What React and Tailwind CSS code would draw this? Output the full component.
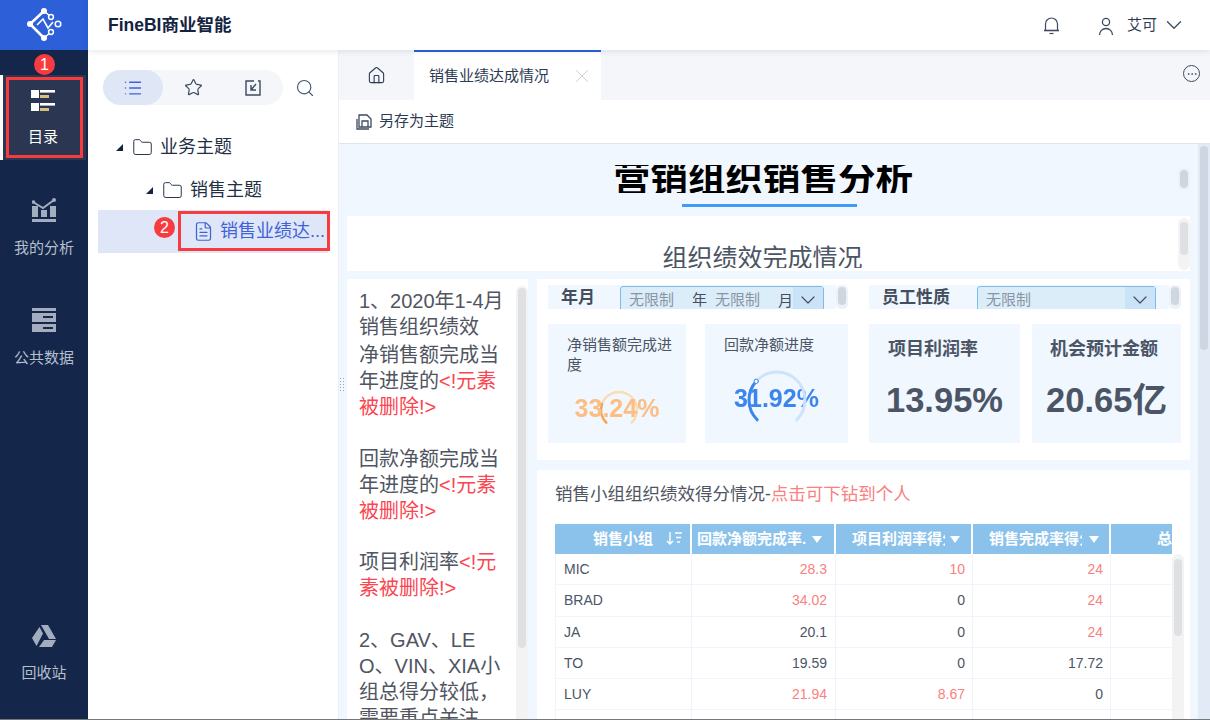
import { Home, X, Star, Search, List, FileText, Folder, Ellipsis, ChevronDown } from "lucide-react";

const font = "font-['Liberation_Sans','Noto_Sans_CJK_SC',sans-serif]";

const rows = [
  ["MIC", "28.3", "10", "24", true, true, true],
  ["BRAD", "34.02", "0", "24", true, false, true],
  ["JA", "20.1", "0", "24", false, false, true],
  ["TO", "19.59", "0", "17.72", false, false, false],
  ["LUY", "21.94", "8.67", "0", true, true, false],
  ["", "", "", "", false, false, false],
];

function Logo() {
  return (
    <svg width="36" height="34" viewBox="0 0 36 34" fill="none" stroke="#fff" strokeWidth="2.6">
      <path d="M17 3 L3 16 L17 30" />
      <path d="M17 3 L24 9 M17 30 L24 24" strokeWidth="1.6" />
      <path d="M10 17 L16 11 L21 20 L26 14" strokeWidth="1.6" />
      <circle cx="17" cy="3" r="3" fill="#fff" stroke="none" />
      <circle cx="3" cy="16" r="3" fill="#fff" stroke="none" />
      <circle cx="17" cy="30" r="3" fill="#fff" stroke="none" />
      <circle cx="24" cy="9" r="2.4" fill="#2c5fd8" strokeWidth="1.5" />
      <circle cx="31" cy="16" r="2.8" fill="#2c5fd8" strokeWidth="1.5" />
      <circle cx="24" cy="24" r="2.4" fill="#2c5fd8" strokeWidth="1.5" />
    </svg>
  );
}

function CatalogIcon() {
  return (
    <svg width="24" height="21" viewBox="0 0 24 21" fill="#fff">
      <rect x="0" y="0" width="8" height="8" />
      <rect x="9" y="0" width="15" height="2.6" />
      <rect x="9" y="5" width="9" height="3" fill="#d8c07a" />
      <rect x="0" y="13" width="8" height="8" />
      <rect x="9" y="13" width="15" height="2.6" />
      <rect x="9" y="18" width="9" height="3" fill="#d8c07a" />
    </svg>
  );
}

function AnalysisIcon() {
  return (
    <svg width="24" height="24" viewBox="0 0 24 24" fill="#a3adbf">
      <rect x="0" y="21" width="24" height="3" />
      <rect x="0" y="8" width="6" height="11" />
      <rect x="9" y="12" width="6" height="7" />
      <rect x="18" y="8" width="6" height="11" />
      <path d="M1 4 L11 10 L22 2" fill="none" stroke="#a3adbf" strokeWidth="2" />
      <circle cx="1.5" cy="4" r="1.8" />
      <circle cx="22" cy="2" r="2" />
    </svg>
  );
}

function DataIcon() {
  return (
    <svg width="24" height="24" viewBox="0 0 24 24" fill="#a3adbf">
      <rect x="0" y="0" width="24" height="3" />
      <rect x="0" y="5" width="24" height="9" />
      <rect x="0" y="16" width="24" height="8" />
      <rect x="11" y="8" width="10" height="2" fill="#14274a" />
      <rect x="11" y="19" width="10" height="2" fill="#14274a" />
    </svg>
  );
}

function RecycleIcon() {
  return (
    <svg width="24" height="22" viewBox="0 0 24 22" fill="#a3adbf">
      <path d="M9 0 H16 L24 14 H17 Z" />
      <path d="M7.5 2 L11 8.5 L4.5 21 L0 13 Z" />
      <path d="M7 22 L12 15 H24 L20 22 Z" />
    </svg>
  );
}

function BellIcon() {
  return (
    <svg width="17" height="19" viewBox="0 0 17 19" fill="none" stroke="#3d4a60" strokeWidth="1.2">
      <path d="M2.5 14 V8 A6 6 0 0 1 14.5 8 V14" />
      <path d="M1 14.5 H16" strokeWidth="1.6" />
      <path d="M6.5 17.5 H10.5" />
    </svg>
  );
}

function UserIcon() {
  return (
    <svg width="16" height="18" viewBox="0 0 16 18" fill="none" stroke="#3d4a60" strokeWidth="1.3">
      <circle cx="8" cy="5" r="3.6" />
      <path d="M1.5 18 A6.5 6.5 0 0 1 14.5 18" />
    </svg>
  );
}

function NavItem({ icon, label, active }) {
  return (
    <div className={`h-[85px] pt-[2px] flex flex-col items-center justify-center gap-[15px] text-[15px] leading-[22px] ${active ? "text-white" : "text-[#b5bfce]"}`}>
      {icon}
      <span>{label}</span>
    </div>
  );
}

function Badge({ n, className }) {
  return (
    <span className={`absolute w-[21px] h-[21px] rounded-full bg-[#f73b3f] text-white text-[16px] flex items-center justify-center ${className}`}>{n}</span>
  );
}

function Filter({ label, labelW, w, children }) {
  return (
    <div className="h-[24px] bg-[#f0f7fe] flex overflow-hidden" style={{ width: w }}>
      <span className={`${labelW} shrink-0 pl-[13px] text-[17px] font-bold text-[#454e5e] leading-[26px]`}>{label}</span>
      {children}
    </div>
  );
}

function ScrollStub({ className = "h-[24px]" }) {
  return (
    <div className={`w-[12px] bg-[#eef2f7] rounded-[5px] flex justify-center ${className}`}>
      <div className="w-[8px] h-[18px] mt-[2px] rounded-[4px] bg-[#cfd6e0]" />
    </div>
  );
}

function HeadArrow() {
  return <span className="shrink-0 mt-[12px] h-0 w-0 border-x-[5px] border-x-transparent border-t-[7px] border-t-white" />;
}

export default function App() {
  return (
    <div className={`relative w-[1210px] h-[720px] overflow-hidden bg-white flex ${font}`}>
      {/* 左侧导航 */}
      <aside className="relative w-[88px] shrink-0 bg-[#14274a] flex flex-col">
        <div className="h-[50px] bg-[#2c5fd8] flex items-center justify-center pl-[1px]"><Logo /></div>
        <div className="mt-[25px] h-[85px] w-[86px] bg-[#2a3652] border-l-[3px] border-white">
          <div className="-ml-[3px]"><NavItem icon={<CatalogIcon />} label="目录" active /></div>
        </div>
        <div className="mt-[25px]"><NavItem icon={<AnalysisIcon />} label="我的分析" /></div>
        <div className="mt-[25px]"><NavItem icon={<DataIcon />} label="公共数据" /></div>
        <div className="mt-auto mb-[24px]"><NavItem icon={<RecycleIcon />} label="回收站" /></div>
        <div className="absolute left-[6px] top-[77px] w-[77px] h-[81px] border-[3px] border-[#f73b3f]" />
        <Badge n="1" className="left-[34px] top-[54px]" />
      </aside>

      <div className="flex-1 min-w-0 flex flex-col">
        {/* 顶栏 */}
        <header className="h-[50px] shrink-0 bg-white flex items-center pl-[20px] pr-[23px] shadow-[0_1px_6px_rgba(20,40,80,0.12)] z-10 relative">
          <span className="text-[17.5px] font-bold text-[#14233f]">FineBI商业智能</span>
          <span className="ml-auto mr-[38px]"><BellIcon /></span>
          <span className="mr-[13px] mt-[2px]"><UserIcon /></span>
          <span className="text-[15px] text-[#2c3a52] mr-[4px]">艾可</span>
          <ChevronDown className="text-[#3d4a60]" size={26} strokeWidth={1.2} />
        </header>

        <div className="flex-1 min-h-0 flex">
          {/* 目录面板 */}
          <div className="relative w-[251px] shrink-0 bg-white border-r border-[#eceff4]">
            <div className="flex items-center mt-[20px] ml-[15px]">
              <div className="w-[180px] h-[35px] rounded-full bg-[#f4f6fa] flex items-center">
                <div className="w-[60px] h-[35px] rounded-full bg-[#dfe6f5] flex items-center justify-center text-[#3f63d6]"><List size={20} strokeWidth={1.7} /></div>
                <div className="w-[60px] flex justify-center text-[#3d4a60]"><Star size={19} strokeWidth={1.5} /></div>
                <div className="w-[60px] flex justify-center text-[#3d4a60]">
                  <svg width="18" height="18" viewBox="0 0 18 18" fill="none" stroke="currentColor" strokeWidth="1.4">
                    <path d="M10 2 H2 V16 H16 V2 H14" />
                    <path d="M12 5 L7 11 M7 6 V11 H12" />
                  </svg>
                </div>
              </div>
              <Search className="ml-[12px] text-[#3d5a74]" size={20} strokeWidth={1.4} />
            </div>
            <div className="mt-[31px] h-[22px] flex items-center pl-[28px] text-[18px] text-[#232f45]">
              <span className="border-l-[7px] border-b-[7px] border-l-transparent border-b-[#14233f] mr-[9px]" />
              <Folder className="mr-[7px]" size={21} strokeWidth={1.1} />
              业务主题
            </div>
            <div className="mt-[21px] h-[22px] flex items-center pl-[58px] text-[18px] text-[#232f45]">
              <span className="border-l-[7px] border-b-[7px] border-l-transparent border-b-[#14233f] mr-[9px]" />
              <Folder className="mr-[7px]" size={21} strokeWidth={1.1} />
              销售主题
            </div>
            <div className="mt-[9px] ml-[10px] w-[230px] h-[43px] bg-[#dfe6f7] flex items-center pl-[95px] text-[18px] text-[#3f63d6]">
              <FileText className="mr-[6px] shrink-0" size={21} strokeWidth={1.4} />
              <span className="whitespace-nowrap">销售业绩达...</span>
            </div>
            <div className="absolute left-[90px] top-[161px] w-[152px] h-[40px] border-[3px] border-[#f73b3f]" />
            <Badge n="2" className="left-[66px] top-[167px]" />
          </div>

          {/* 右侧内容 */}
          <div className="relative flex-1 min-w-0 flex flex-col">
            <div className="h-[50px] shrink-0 bg-[#f4f6fa] flex">
              <div className="w-[75px] flex items-center justify-center text-[#2c3a52]"><Home size={19} strokeWidth={1.4} /></div>
              <div className="w-[187px] bg-white border-t-2 border-[#2c5fd8] flex items-center pl-[15px] text-[15px] text-[#2c3a52]">
                销售业绩达成情况
                <X className="ml-auto mr-[8px] text-[#c4c9d0]" size={22} strokeWidth={1} />
              </div>
              <div className="ml-auto mr-[10px] mt-[15px] w-[17px] h-[17px] rounded-full border border-[#3d4a60] flex items-center justify-center text-[#3d4a60]"><Ellipsis size={12} strokeWidth={1.5} /></div>
            </div>
            <div className="h-[44px] shrink-0 bg-white border-b border-[#dfe4ec] flex items-center pl-[17px] text-[15px] text-[#2c3a52]">
              <svg className="mr-[6px]" width="17" height="17" viewBox="0 0 17 17" fill="none" stroke="#3d4a60" strokeWidth="1.3">
                <path d="M3 14 V2 H11 L15 6 V14 Z" />
                <path d="M6 14 V8 H12 V14" />
                <path d="M1 6 V16 H13" />
              </svg>
              另存为主题
            </div>

            {/* 仪表板 */}
            <div className="flex-1 min-h-0 overflow-hidden bg-[#f0f7fe] relative">
              <div className="relative h-[72px] pt-[21px] pr-[10px] flex flex-col items-center">
                <div className="h-[28px] overflow-hidden pr-[13px]">
                  <span className="block text-[37.5px] leading-[28px] font-bold text-black whitespace-nowrap">营销组织销售分析</span>
                </div>
                <div className="mt-[11px] w-[175px] h-[3px] bg-[#3f9bf5]" />
                <ScrollStub className="absolute left-[839px] top-[24px] h-[22px]" />
              </div>
              <div className="relative ml-[8px] w-[843px] h-[55px] bg-white flex justify-center pr-[12px] pt-[26px]">
                <div className="h-[26px] overflow-hidden text-[25px] text-[#4b5565] leading-[32px]">组织绩效完成情况</div>
                <div className="absolute right-0 top-[2px] w-[12px] h-[52px] bg-[#f3f3f3] rounded-[6px] flex justify-center">
                  <div className="w-[8px] h-[33px] mt-[4px] rounded-[4px] bg-[#dfe0e3]" />
                </div>
              </div>

              <div className="ml-[8px] mt-[8px] flex gap-[9px]">
                {/* 文本框 */}
                <div className="relative w-[181px] h-[460px] bg-white pl-[12px] pr-[12px] pt-[9px] text-[20px] leading-[26px] text-[#505561] overflow-hidden">
                  <p className="w-[146px]">1、2020年1-4月销售组织绩效</p>
                  <p className="w-[146px] mt-[2px]">净销售额完成当年进度的<span className="text-[#fb4551]">&lt;!元素被删除!&gt;</span></p>
                  <p className="w-[146px] mt-[26px]">回款净额完成当年进度的<span className="text-[#fb4551]">&lt;!元素被删除!&gt;</span></p>
                  <p className="w-[146px] mt-[25px]">项目利润率<span className="text-[#fb4551]">&lt;!元素被删除!&gt;</span></p>
                  <p className="w-[146px] mt-[26px] whitespace-nowrap">2、GAV、LE<br />O、VIN、XIA小<br />组总得分较低，<br />需要重点关注</p>
                  <div className="absolute right-0 top-[7px] bottom-0 w-[12px] bg-[#f3f3f3] rounded-t-[6px] flex justify-center">
                    <div className="w-[8px] h-[360px] mt-[2px] rounded-[4px] bg-[#dfe0e3]" />
                  </div>
                </div>

                <div className="w-[653px]">
                  {/* 指标卡 */}
                  <div className="h-[181px] bg-white pl-[11px] pt-[6px]">
                    <div className="flex">
                      <Filter label="年月" labelW="w-[72px]" w={288}>
                        <div className="w-[204px] h-[30px] mt-[1px] rounded-t-[3px] border border-[#7dbbee] bg-[#dcedfa] flex whitespace-nowrap text-[15px] leading-[26px] text-[#8a94a6] pl-[8px]">
                          <span>无限制</span>
                          <span className="ml-[18px] text-[#454e5e]">年</span>
                          <span className="ml-[8px]">无限制</span>
                          <span className="ml-[18px] text-[#454e5e] mt-[1px]">月</span>
                          <span className="ml-auto w-[30px] shrink-0 bg-[#cbe3f7] flex justify-center pt-[1px]"><ChevronDown className="text-[#454e5e]" size={24} strokeWidth={1.2} /></span>
                        </div>
                      </Filter>
                      <ScrollStub />
                      <div className="w-[21px]" />
                      <Filter label="员工性质" labelW="w-[108px]" w={300}>
                        <div className="w-[179px] h-[30px] mt-[1px] rounded-t-[3px] border border-[#7dbbee] bg-[#dcedfa] flex whitespace-nowrap text-[15px] leading-[26px] text-[#8a94a6] pl-[8px]">
                          <span>无限制</span>
                          <span className="ml-auto w-[30px] shrink-0 bg-[#cbe3f7] flex justify-center pt-[1px]"><ChevronDown className="text-[#454e5e]" size={24} strokeWidth={1.2} /></span>
                        </div>
                      </Filter>
                      <ScrollStub />
                    </div>
                    <div className="mt-[15px] flex h-[119px]">
                      <div className="relative w-[138px] bg-[#f0f7fe] pl-[19px] pr-[12px] pt-[11px] text-[15px] leading-[20px] text-[#4b5565]">
                        净销售额完成进度
                        <svg className="absolute left-0 top-0" width="138" height="119" fill="none" strokeLinecap="round">
                          <path d="M58.3 98.7 A18 18 0 1 1 83.7 98.7" stroke="#fbdcb9" strokeWidth="2.5" />
                          <path d="M58.3 98.7 A18 18 0 0 1 54 80" stroke="#f2a65a" strokeWidth="2.5" />
                        </svg>
                        <div className="absolute left-0 right-0 top-[69px] h-[30px] text-center text-[25px] leading-[30px] font-bold text-[#fbbf85] blur-[0.4px]">33.24%</div>
                      </div>
                      <div className="relative ml-[19px] w-[143px] bg-[#f0f7fe] pl-[19px] pt-[11px] text-[15px] leading-[20px] text-[#4b5565]">
                        回款净额进度
                        <div className="absolute left-0 right-0 top-[59px] h-[30px] text-center text-[25px] leading-[30px] font-bold text-[#3a86ee] blur-[0.3px]">31.92%</div>
                        <svg className="absolute left-0 top-0" width="143" height="119" fill="none" strokeLinecap="round">
                          <path d="M52.2 95.8 A28 28 0 1 1 91.8 95.8" stroke="#cfe2fb" strokeWidth="3" />
                          <path d="M52.2 95.8 A28 28 0 0 1 51.2 57.3" stroke="#3a86ee" strokeWidth="3" />
                          <circle cx="51.2" cy="57.3" r="2.2" fill="#fff" stroke="#3a86ee" strokeWidth="1" />
                        </svg>
                      </div>
                      <div className="ml-[21px] w-[151px] bg-[#f0f7fe] pt-[13px] pl-[19px] text-[#4b5565]">
                        <div className="text-[18px] leading-[24px] font-bold">项目利润率</div>
                        <div className="mt-[18px] -ml-[2px] text-[34.5px] leading-[42px] font-bold whitespace-nowrap">13.95%</div>
                      </div>
                      <div className="ml-[12px] w-[149px] bg-[#f0f7fe] pt-[13px] flex flex-col items-center text-[#4b5565]">
                        <div className="mr-[5px] text-[18px] leading-[24px] font-bold">机会预计金额</div>
                        <div className="mt-[18px] text-[34.5px] leading-[42px] font-bold whitespace-nowrap">20.65亿</div>
                      </div>
                    </div>
                  </div>

                  {/* 表格 */}
                  <div className="mt-[10px] relative h-[260px] bg-white pl-[18px] pt-[12px] overflow-hidden">
                    <div className="text-[17.5px] leading-[24px] text-[#505561]">销售小组组织绩效得分情况-<span className="text-[#fb8080]">点击可下钻到个人</span></div>
                    <div className="mt-[18px] w-[617px] text-[14px]">
                      <div className="flex h-[30px] bg-[#8bc2ec] text-white font-bold text-[15px] leading-[29px] overflow-hidden">
                        <div className="w-[137px] shrink-0 flex pl-[38px] border-r-2 border-white">
                          <span>销售小组</span>
                          <svg className="ml-[13px] mt-[7px]" width="16" height="15" viewBox="0 0 16 15" fill="none" stroke="#fff" strokeWidth="1.4">
                            <path d="M4 1 V13 M1 10 L4 13 L7 10" />
                            <path d="M9 2 H16 M10 6.5 H15 M11 11 H14" />
                          </svg>
                        </div>
                        <div className="w-[144px] shrink-0 flex pl-[5px] border-r-2 border-white whitespace-nowrap">
                          <span className="w-[109px] overflow-hidden">回款净额完成率.</span>
                          <span className="w-[6px]" />
                          <HeadArrow />
                        </div>
                        <div className="w-[137px] shrink-0 flex pl-[16px] border-r-2 border-white whitespace-nowrap">
                          <span className="w-[93px] overflow-hidden">项目利润率得分</span>
                          <span className="w-[5px]" />
                          <HeadArrow />
                        </div>
                        <div className="w-[138px] shrink-0 flex pl-[16px] border-r-2 border-white whitespace-nowrap">
                          <span className="w-[93px] overflow-hidden">销售完成率得分</span>
                          <span className="w-[7px]" />
                          <HeadArrow />
                        </div>
                        <div className="flex-1 whitespace-nowrap pl-[46px]">总分</div>
                      </div>
                      {rows.map((r) => (
                        <div key={r[0] || "empty"} className="flex h-[31.25px] items-center border-b-[1px] border-[#eef5fc] text-[#4b5565] leading-[30px]">
                          <div className="w-[137px] h-full shrink-0 pl-[8px] border-x border-[#eef5fc]">{r[0]}</div>
                          <div className={`w-[144px] h-full shrink-0 pr-[8px] text-right border-r border-[#eef5fc] ${r[4] ? "text-[#fb8080]" : ""}`}>{r[1]}</div>
                          <div className={`w-[137px] h-full shrink-0 pr-[7px] text-right border-r border-[#eef5fc] ${r[5] ? "text-[#fb8080]" : ""}`}>{r[2]}</div>
                          <div className={`w-[138px] h-full shrink-0 pr-[7px] text-right border-r border-[#eef5fc] ${r[6] ? "text-[#fb8080]" : ""}`}>{r[3]}</div>
                        </div>
                      ))}
                    </div>
                    <div className="absolute left-[635px] top-[84px] bottom-0 w-[12px] bg-[#f3f3f3] rounded-t-[6px] flex justify-center">
                      <div className="w-[8px] h-[77px] mt-[5px] rounded-[4px] bg-[#dfe0e3]" />
                    </div>
                  </div>
                </div>
              </div>

              {/* 外层滚动条 */}
              <div className="absolute right-0 top-0 bottom-0 w-[12px] bg-[#e2eaf5]">
                <div className="mx-auto mt-[2px] w-[8px] h-[204px] rounded-[4px] bg-[#cdd6e2]" />
              </div>
            </div>
            <div className="absolute left-0 top-[327px] w-[6px] h-[16px] bg-[radial-gradient(#9aa6b8_1px,transparent_1px)] bg-[length:3px_3px]" />
          </div>
        </div>
      </div>
      <div className="absolute left-0 right-0 bottom-0 h-[1px] bg-[#777]" />
    </div>
  );
}
